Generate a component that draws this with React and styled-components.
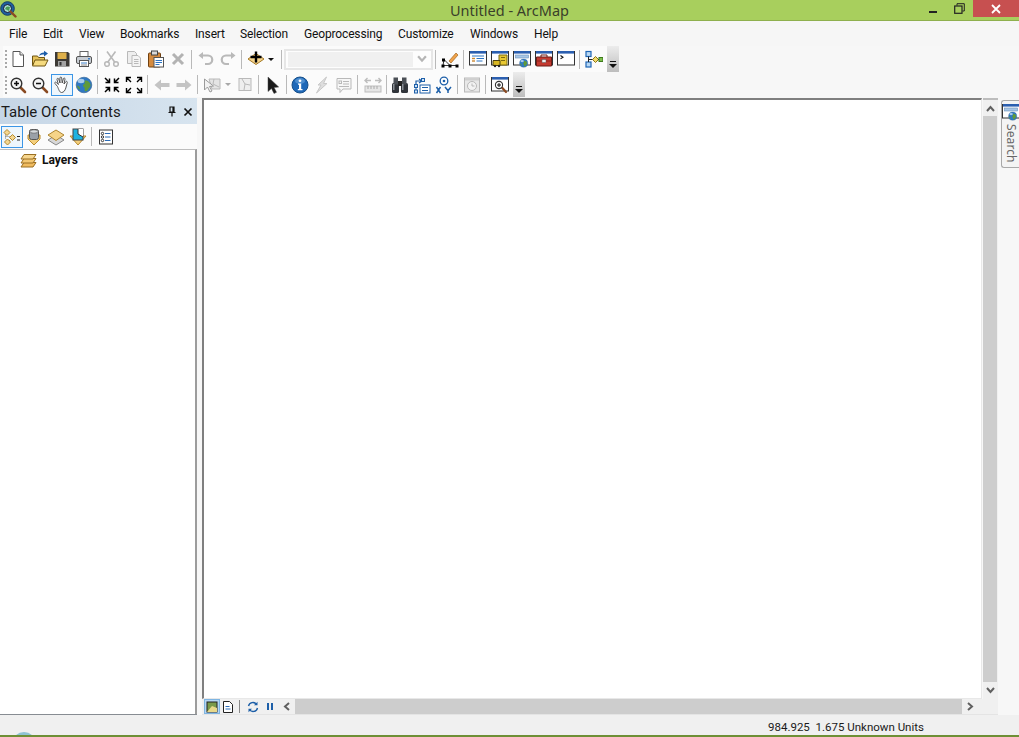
import React from "react";
import styled, { createGlobalStyle } from "styled-components";

const GlobalStyle = createGlobalStyle`
  html, body { margin: 0; padding: 0; background: #f5f5f5; }
  body { font-family: Roboto, "Noto Sans", Arial, sans-serif; overflow: hidden; }
  * { box-sizing: border-box; }
`;

const Window = styled.div`
  width: 1019px; height: 737px; display: flex; flex-direction: column;
  background: #f7f7f7; overflow: hidden; color: #1a1a1a;
`;
const TitleBar = styled.header`
  height: 21px; flex: none; display: flex; align-items: flex-start;
  background: #a8cf5d; border-bottom: 1px solid #8fb04e;
`;
const AppIcon = styled.div`
  width: 17px; height: 20px; padding: 1px 0 0 0; flex: none;
`;
const TitleText = styled.div`
  flex: 1; text-align: center; font-family: "Noto Sans", sans-serif; font-size: 14.5px; line-height: 20px;
  color: #3a3f2a; padding-left: 82px;
`;
const WinControls = styled.div`
  display: flex; height: 17px; flex: none; align-items: stretch;
`;
const WinButton = styled.div`
  width: ${p => p.$w}px; display: flex; align-items: center; justify-content: center;
  background: ${p => p.$close ? "#c75050" : "transparent"};
`;
const MenuBar = styled.nav`
  height: 25px; flex: none; display: flex; align-items: center; padding-left: 9px;
  font-size: 12px; letter-spacing: -0.15px; background: #f6f6f6;
`;
const MenuItem = styled.span`
  width: ${p => p.$w}px; flex: none; white-space: nowrap; color: #111;
`;
const ToolRow = styled.div`
  height: ${p => p.$h}px; flex: none; display: flex; align-items: center;
`;
const Tools = styled.div`
  height: 100%; display: flex; align-items: center; background: #fbfbfb; padding-left: 2px;
  margin-left: 3px;
`;
const Grip = styled.div`
  width: 2px; height: 18px; flex: none;
  background: repeating-linear-gradient(to bottom, #a8a8a8 0 2px, transparent 2px 4px);
`;
const ToolButton = styled.div`
  width: ${p => p.$w || 22}px; height: 22px; flex: none; display: flex; align-items: center; justify-content: flex-start;
  gap: ${p => p.$gap || 0}px;
  border: 1px solid ${p => p.$on ? "#3c96e6" : "transparent"};
  padding-left: 1px;
  background: ${p => p.$on ? "#eef6fc" : "transparent"};
`;
const Sep = styled.div`
  width: ${p => p.$w || 6}px; height: 19px; flex: none;
  &::after { content: ""; display: block; width: 1px; height: 19px; margin-left: 2px; background: #b9b9b9; }
`;
const Caret = styled.div`
  width: 0; height: 0; flex: none;
  border-left: 3px solid transparent; border-right: 3px solid transparent;
  border-top: 3px solid ${p => p.$off ? "#a8a8a8" : "#111"};
`;
const Combo = styled.div`
  width: 149px; height: 21px; flex: none; border: 2px solid #e6e6e6; background: #fdfdfd;
  display: flex; align-items: center; padding: 0 3px 0 2px;
`;
const ComboField = styled.div`
  width: 125px; height: 15px; flex: none; background: #f0f0f0;
`;
const ComboArrow = styled.div`
  flex: 1; display: flex; justify-content: flex-end; padding-right: 1px;
`;
const Overflow = styled.div`
  width: 12px; height: 100%; flex: none; margin-left: 2px;
  background: linear-gradient(to bottom, #ececec, #bdbdbd);
  display: flex; flex-direction: column; align-items: center; justify-content: flex-end; gap: 2px; padding-bottom: 4px;
  &::before { content: ""; width: 6px; height: 1px; background: #111; }
  &::after { content: ""; border-left: 4px solid transparent; border-right: 4px solid transparent; border-top: 4px solid #111; }
`;
const Dock = styled.div`
  flex: 1; min-height: 0; display: flex; align-items: stretch; margin-top: 1px;
`;
const TocPanel = styled.aside`
  width: 197px; flex: none; display: flex; flex-direction: column;
  border-bottom: 1px solid #878c92;
`;
const TocHeader = styled.div`
  height: 26px; flex: none; display: flex; align-items: center; padding: 1px 1px 0 1px;
  background: linear-gradient(to right, #c6d6e6, #d7e4ef);
`;
const TocTitle = styled.div`
  flex: 1; font-size: 15px; color: #1a1a1a; white-space: nowrap;
`;
const TocAction = styled.div`
  width: 16px; height: 16px; display: flex; align-items: center; justify-content: center; flex: none;
`;
const TocTools = styled.div`
  height: 25px; flex: none; display: flex; align-items: center; padding-left: 1px; background: #fbfbfb;
`;
const Tree = styled.div`
  flex: 1; background: #fff; border-top: 1px solid #bdbdbd; border-right: 2px solid #9c9c9c;
  padding: 1px 0 0 20px;
`;
const TreeRow = styled.div`
  display: flex; align-items: center; gap: 5px; height: 18px;
  font-size: 12px; font-weight: 700; color: #111;
`;
const MapArea = styled.main`
  width: 796px; margin-left: 5px; flex: none; display: flex; flex-direction: column;
`;
const MapRow = styled.div`
  flex: 1; min-height: 0; display: flex;
`;
const Canvas = styled.div`
  flex: 1; background: #fff; border-top: 2px solid #7f7f7f; border-left: 2px solid #7f7f7f;
  border-right: 1px solid #e8e8e8; border-bottom: 1px solid #e8e8e8;
`;
const VScroll = styled.div`
  width: 15px; margin-left: 1px; flex: none; display: flex; flex-direction: column; background: #f0f0f0;
  border-top: 2px solid #bdbdbd;
`;
const ScrollEnd = styled.div`
  width: ${p => p.$w || 15}px; height: ${p => p.$h || 15}px; flex: none;
  display: flex; align-items: center; justify-content: center;
`;
const VThumb = styled.div`
  flex: 1; background: #cdcdcd; margin-right: 1px;
`;
const HBar = styled.div`
  height: 16px; flex: none; display: flex; align-items: center; background: #f0f0f0;
  border-bottom: 1px solid #e4e4e4; padding-left: 2px;
`;
const ViewButton = styled.div`
  width: ${p => p.$w || 16}px; height: 15px; flex: none; display: flex; align-items: center; justify-content: center;
  background: ${p => p.$on ? "#b5d6f3" : "transparent"};
  border: 1px solid ${p => p.$on ? "#7fb5e2" : "transparent"};
`;
const HSep = styled.div`
  width: 1px; height: 13px; margin: 0 5px 0 3px; background: #8a8a8a; flex: none;
`;
const HThumb = styled.div`
  width: 667px; height: 15px; flex: none; background: #cdcdcd;
`;
const SearchRail = styled.div`
  width: 21px; flex: none; padding: 2px 0 0 3px;
`;
const SearchTab = styled.div`
  height: 68px; width: 18px; display: flex; flex-direction: column; align-items: center;
  background: #f4f4f4; border: 1px solid #a9a9a9; border-right: 0; border-radius: 3px 0 0 3px; padding-top: 2px;
`;
const SearchLabel = styled.span`
  writing-mode: vertical-rl; font-family: "Noto Sans", sans-serif; font-size: 12px; color: #666; letter-spacing: 0.1px; line-height: 16px; margin-top: 3px;
`;
const StatusBar = styled.footer`
  height: 22px; flex: none; position: relative; background: #f0f0f0;
  border-bottom: 2px solid #6e8f35; display: flex; align-items: center; justify-content: flex-start;
  padding: 3px 0 0 768px; font-size: 11.5px; color: #1a1a1a; white-space: pre; overflow: hidden;
`;
const TaskOrb = styled.div`
  position: absolute; left: 12px; top: 17px; width: 24px; height: 24px; border-radius: 50%;
  background: #8fc3d3;
`;

const G = ({ children }) => <svg width="18" height="18" viewBox="0 0 18 18">{children}</svg>;
const OFF = "#b9b9b9";

const Mag = ({ plus }) => (<>
  <path d="M11 11l5 5" stroke="#8a4a22" strokeWidth="2.6" strokeLinecap="round" />
  <circle cx="7.5" cy="7.5" r="5.3" fill="#f4f4f4" stroke="#333" strokeWidth="1.4" />
  <path d="M5 7.5h5" stroke="#111" strokeWidth="1.5" />
  {plus && <path d="M7.5 5v5" stroke="#111" strokeWidth="1.5" />}
</>);
const Win = ({ children, c = "#2b5fb0" }) => (<>
  <rect x=".5" y="1.5" width="17" height="13.5" fill="#fff" stroke="#333" />
  <rect x="1" y="1" width="16" height="2.6" fill={c} />
  {children}
</>);
const Globe = ({ x = 0, y = 0, k = 1 }) => (
  <g transform={`translate(${x} ${y}) scale(${k})`}>
    <circle cx="9" cy="9" r="7.800" fill="#2f78c4" stroke="#2b5a8c" strokeWidth=".6" />
    <path d="M10 4.500c2.500-.5 5 1.500 5.500 4 .2 1.500-.5 3-1.500 3.500l-1.500 2.500c-1 .8-2.200 1-2.800.5-.3-1.200.3-2.500-.2-3.500-.8-.5-1.700-1-1.500-2.200.3-1 1.500-1 1.800-2 .1-1-.6-1.800.2-2.800z" fill="#5f9a3a" />
    <path d="M2 9.500c1.200 0 2.300 1 2.800 2.300l.2 2c-1.500-.7-2.800-2.300-3-4.300z" fill="#5f9a3a" />
    <ellipse cx="6" cy="5" rx="3.400" ry="2.200" fill="#d4e8f8" opacity=".75" />
  </g>
);

const ICONS = {
  new: <G><path d="M4 1.5h7l3.5 3.5v11.5H4z" fill="#fff" stroke="#555" /><path d="M11 1.5V5h3.5" fill="#e8e8e8" stroke="#555" /></G>,
  open: <G><path d="M1.5 15V6h5l1 1.5h6V10" fill="#e6c25a" stroke="#6f5512" /><path d="M4 10h13l-3 6H1.5z" fill="#f5da7e" stroke="#6f5512" /><path d="M8 6c.5-2.5 3-3.5 5-3.5V.8L17 3.6l-4 2.8V4.6C11 4.6 9.5 5 8 6z" fill="#1c5da8" /></G>,
  save: <G><path d="M2 2h13l1.5 1.5V16.500H2z" fill="#3d3a36" /><rect x="4.500" y="2.500" width="9" height="6.500" fill="#dfb04a" /><rect x="5" y="11" width="8" height="5.500" fill="#a3a3a3" /><rect x="6.500" y="12" width="2" height="3.500" fill="#333" /></G>,
  print: <G><rect x="5" y="1.500" width="8" height="6" fill="#fff" stroke="#666" /><rect x="1.500" y="6.500" width="15" height="7" rx="1.500" fill="#c8cdd3" stroke="#555" /><rect x="4.500" y="10.500" width="9" height="6" fill="#fff" stroke="#555" /><path d="M6 13h6" stroke="#3b7fc6" /><path d="M6 15h6" stroke="#888" /><rect x="13" y="8" width="2" height="1.500" fill="#3b7fc6" /></G>,
  cut: <G><path d="M4 1.500l8 11M12.500 1.500l-8 11" stroke={OFF} strokeWidth="1.600" /><circle cx="4" cy="14" r="2.300" fill="none" stroke={OFF} strokeWidth="1.500" /><circle cx="13" cy="14" r="2.300" fill="none" stroke={OFF} strokeWidth="1.500" /></G>,
  copy: <G><path d="M2.500 1.500h7l2 2v10h-9z" fill="#eee" stroke={OFF} /><path d="M7 5.500h6l2.500 2.500v8.500H7z" fill="#f4f4f4" stroke={OFF} /><path d="M9 9.500h4.500M9 11.500h4.500M9 13.500h4.500" stroke={OFF} /></G>,
  paste: <G><rect x="1.500" y="3" width="12" height="14" rx="1" fill="#d58b3f" stroke="#704010" /><rect x="4.500" y="1" width="6" height="4" fill="#d9d9d9" stroke="#444" /><rect x="7" y="7.500" width="9.500" height="9.500" fill="#fff" stroke="#555" /><path d="M8.500 10.500h6.500M8.500 12.500h6.500M8.500 14.500h4" stroke="#2d74c4" /></G>,
  del: <G><path d="M4 4l10 10M14 4L4 14" stroke="#b3b3b3" strokeWidth="3" /></G>,
  undo: <G><path d="M5 5.500h6a4 4 0 0 1 0 8.500H8" fill="none" stroke={OFF} strokeWidth="2.200" /><path d="M1.500 5.500L6 2v7z" fill={OFF} /></G>,
  redo: <G><path d="M13 5.500H7a4 4 0 0 0 0 8.500h3" fill="none" stroke={OFF} strokeWidth="2.200" /><path d="M16.500 5.500L12 2v7z" fill={OFF} /></G>,
  add: <G><path d="M9 3.500l8 5.500-8 5.500L1 9z" fill="#f5d48c" stroke="#a47824" /><path d="M9 1.500v11M3.500 7h11" stroke="#000" strokeWidth="2.400" /></G>,
  editor: <G><path d="M3 9.500l-1 6M3 9.500l6 6M2 15.500h14" stroke="#333" /><rect x="1" y="8.500" width="3" height="3" fill="#000" /><rect x="0.500" y="14.500" width="3" height="3" fill="#000" /><rect x="7.500" y="14.500" width="3" height="3" fill="#000" /><rect x="14.500" y="14.500" width="3" height="3" fill="#000" /><path d="M8 11L15 3l2 2-7 8z" fill="#f0a24a" stroke="#a06520" strokeWidth=".7" /></G>,
  toc: <G><Win><path d="M3 6h12" stroke="#2d74c4" /><path d="M3 8.500h3" stroke="#c83" strokeWidth="1.400" /><path d="M7.500 8.500h7.500" stroke="#2d74c4" /><path d="M3 11h3" stroke="#c83" strokeWidth="1.400" /><path d="M7.500 11h6" stroke="#2d74c4" /></Win></G>,
  catalog: <G><Win><path d="M8 5h8v10H8z" fill="#e8c832" stroke="#7b6a10" /><path d="M10 7.500h4M10 10.500h4" stroke="#7b6a10" /><path d="M2 10.500h7v5H2z" fill="#d8b722" stroke="#4a4010" /><circle cx="4" cy="16" r="1.200" fill="#222" /><circle cx="8" cy="16" r="1.200" fill="#222" /></Win></G>,
  searchWin: <G><Win><rect x="2.500" y="5" width="13" height="3" fill="#a9c6e6" stroke="#6a8fb8" strokeWidth=".6" /><Globe x={6} y={8.500} k={.52} /></Win></G>,
  toolbox: <G><Win><path d="M1.500 7h15v9h-15z" fill="#c43a30" stroke="#6f1c16" /><path d="M6 7V5h6v2" fill="none" stroke="#6f1c16" /><rect x="7" y="9.500" width="4" height="3" fill="#eee" stroke="#555" strokeWidth=".5" /><path d="M1.500 11h5M11 11h5.500" stroke="#8e241c" /></Win></G>,
  python: <G><Win><path d="M3.500 5.500l2.500 1.700-2.500 1.700" fill="none" stroke="#111" strokeWidth="1.100" /></Win></G>,
  model: <G><rect x="1" y="1.500" width="5" height="5" fill="#b8d8f4" stroke="#1f66b5" strokeWidth="1.200" /><rect x="1" y="12" width="5" height="5" fill="#b8d8f4" stroke="#1f66b5" strokeWidth="1.200" /><path d="M3.500 6.500V12M3.500 9.500H8" stroke="#222" /><path d="M7.500 9.500l3-3 3 3-3 3z" fill="#f4da6a" stroke="#8a7418" /><path d="M13 9.500h1" stroke="#222" /><rect x="14" y="7.500" width="3.800" height="4" fill="#7ec04e" stroke="#3d7a1a" /></G>,
  zin: <G><Mag plus /></G>,
  zout: <G><Mag /></G>,
  hand: <G><path d="M4.500 10.500L2 7.500c-.8-1 .6-2 1.400-1l2 2L4 3.500c-.4-1.200 1.300-1.600 1.700-.5L7 7 6.900 2c0-1.200 1.700-1.200 1.800 0L9.200 7 10.400 2.700c.3-1.100 1.800-.8 1.600.4L11 8l1.800-2.300c.7-.9 2 .1 1.400 1.100L12.800 12c-.8 2.500-2 4.500-4.300 4.500-2 0-2.900-3.500-4-6z" fill="#fff" stroke="#444" strokeWidth=".9" /></G>,
  globe: <G><Globe /></G>,
  fixIn: <G><path d="M2 2l4 4M6.500 2.500v4h-4M16 2l-4 4M11.500 2.500v4h4M2 16l4-4M2.500 11.500h4v4M16 16l-4-4M15.500 11.500h-4v4" fill="none" stroke="#000" strokeWidth="1.500" /></G>,
  fixOut: <G><path d="M6 6L2 2M1.500 6V1.500H6M12 6l4-4M12 1.500h4.500V6M6 12l-4 4M1.500 12v4.500H6M12 12l4 4M16.500 12v4.500H12" fill="none" stroke="#000" strokeWidth="1.400" /></G>,
  back: <G><path d="M1.500 9L8 3.500V7h8.500v4H8v3.500z" fill="#c4c4c4" /></G>,
  fwd: <G><path d="M16.500 9L10 3.500V7H1.500v4H10v3.500z" fill="#c4c4c4" /></G>,
  selFeat: <G><path d="M6 3h11v10H9z" fill="#e4e4e4" stroke={OFF} /><path d="M11 3l-1 5 6 3" fill="none" stroke={OFF} /><path d="M1.500 3v11l3-3 2.500 5 2-1-2.500-4.500 4-.5z" fill="#f2f2f2" stroke="#9a9a9a" /></G>,
  clearSel: <G><rect x="3" y="2.500" width="12" height="12" fill="#eee" stroke={OFF} /><path d="M6 3l3 5 5 1M9 8l-1 6" fill="none" stroke={OFF} /></G>,
  arrow: <G><path d="M4 1v14.500l3.500-3 2.500 5 2.500-1.200-2.400-4.800 4.600-.5z" fill="#1a1a1a" stroke="#444" strokeWidth=".5" /></G>,
  info: <G><circle cx="9" cy="9" r="8" fill="#1e68b8" stroke="#174f8a" /><ellipse cx="9" cy="5" rx="5" ry="3" fill="#6aa6dd" opacity=".6" /><path d="M7 7.500h3.200V13H11.500v1.300H6.800V13H8V8.800H7z" fill="#fff" /><circle cx="9" cy="4.800" r="1.400" fill="#fff" /></G>,
  bolt: <G><path d="M13.500 1L5 9h3l-4.500 8L14 7.500h-3.500z" fill="#dedede" stroke="#c8c8c8" /></G>,
  tip: <G><path d="M2 2.500h14v10.500H8l-3 3.500V13H2z" fill="#f7f7f7" stroke={OFF} /><rect x="4" y="5" width="2.500" height="2.500" fill="none" stroke={OFF} /><path d="M8 5.500h6M8 8h6M4 10.500h10" stroke={OFF} /></G>,
  measure: <G><path d="M1 4.500h6M11 4.500h6M3.500 2L1 4.500 3.500 7M14.500 2L17 4.500 14.500 7" fill="none" stroke="#bdbdbd" strokeWidth="1.400" /><rect x="1" y="10" width="16" height="6" fill="#e6e6e6" stroke="#bdbdbd" /><path d="M4 10v3M7 10v3M10 10v3M13 10v3" stroke="#aaa" /></G>,
  find: <G><rect x="1" y="7" width="7" height="10" rx="1.500" fill="#30343a" /><rect x="10" y="7" width="7" height="10" rx="1.500" fill="#30343a" /><rect x="2.500" y="1.500" width="4.500" height="7" fill="#4a4f55" /><rect x="11" y="1.500" width="4.500" height="7" fill="#4a4f55" /><rect x="7" y="5" width="4" height="5" fill="#222" /><rect x="2" y="8" width="1.500" height="6" fill="#8a8f96" /><rect x="11" y="8" width="1.500" height="6" fill="#8a8f96" /></G>,
  route: <G><path d="M3 10V5h5M6 3l3 2-3 2" fill="none" stroke="#1d5fa8" strokeWidth="1.200" /><rect x="1.500" y="8.500" width="3" height="3" fill="#cfe3f7" stroke="#1d5fa8" /><rect x="1.500" y="14" width="3" height="3" fill="#cfe3f7" stroke="#1d5fa8" /><rect x="8.500" y="2.500" width="3" height="3" fill="#cfe3f7" stroke="#1d5fa8" /><path d="M3 11.500V14" stroke="#1d5fa8" /><rect x="7" y="9" width="10" height="8" fill="#fff" stroke="#1d5fa8" /><path d="M9 11.500h6M9 14.500h6" stroke="#1d5fa8" /></G>,
  xy: <G><circle cx="9" cy="5" r="3.800" fill="#fff" stroke="#1d5fa8" strokeWidth="1.300" /><circle cx="9" cy="5" r="1.300" fill="#1d5fa8" /><path d="M1.500 11l4 6M5.500 11l-4 6M10 11l3 3.500 3-3.500M13 14.500V17" fill="none" stroke="#1d5fa8" strokeWidth="1.500" /></G>,
  time: <G><rect x="1.500" y="2" width="15" height="14" fill="#e8e8e8" stroke={OFF} /><rect x="2" y="2.500" width="14" height="2" fill="#cfcfcf" /><circle cx="9" cy="10" r="4.500" fill="#f3f3f3" stroke={OFF} /><path d="M9 7.500V10h2.500" fill="none" stroke={OFF} /></G>,
  magnifier: <G><Win><path d="M10.500 11l4.500 5" stroke="#8a4a22" strokeWidth="2.200" strokeLinecap="round" /><circle cx="8" cy="9" r="3.600" fill="#fff" stroke="#333" strokeWidth="1.100" /><path d="M6 9h4M8 7v4" stroke="#111" /></Win></G>,
  tocList: <G><path d="M2.500 6.500V11M2.500 8.500H7M4 12.500h3" stroke="#777" strokeDasharray="1 1" /><path d="M4 1.500l3 3-3 3-3-3z" fill="#f3d690" stroke="#b48a2e" /><path d="M9.500 6.500l3 3-3 3-3-3z" fill="#f3d690" stroke="#b48a2e" /><path d="M4.500 11l3 3-3 3-3-3z" fill="#f3d690" stroke="#b48a2e" /><path d="M14 8.500h3M14 12h3" stroke="#222" strokeWidth="1.200" /></G>,
  tocSource: <G><path d="M3 7v4l6 6 6-6V7z" fill="#f4cf7c" stroke="#b98b2e" /><rect x="4.500" y="1.500" width="9" height="10" rx="2" fill="#9aa0a8" stroke="#555" /><ellipse cx="9" cy="3.500" rx="4" ry="1.700" fill="#d6dade" stroke="#555" strokeWidth=".6" /></G>,
  tocDraw: <G><path d="M9 7l8 5-8 5-8-5z" fill="#d8d8d8" stroke="#888" /><path d="M9 2l8 5-8 5.500L1 7z" fill="#f6d488" stroke="#ad8530" /></G>,
  tocSel: <G><path d="M3 8H1l8 9 8-9h-2z" fill="#f4cf7c" stroke="#b98b2e" /><rect x="4" y="1" width="10" height="11" fill="#1fb3e0" stroke="#444" /><path d="M9 1v5l5 3V1z" fill="#fff" /><path d="M9 1v5l5 3" fill="none" stroke="#333" /></G>,
  options: <G><rect x="2.500" y="2" width="13" height="14" fill="#fff" stroke="#333" /><circle cx="5.500" cy="5.500" r="1.200" fill="none" stroke="#333" /><circle cx="5.500" cy="9" r="1.200" fill="none" stroke="#333" /><circle cx="5.500" cy="12.500" r="1.200" fill="none" stroke="#333" /><path d="M8 5.500h5.500M8 9h5.500M8 12.500h5.500" stroke="#2b6cb8" /></G>,
  layers: <svg width="17" height="15" viewBox="0 0 17 15"><path d="M4 9.500h12l-3 4.500H1z" fill="#f0bb5f" stroke="#9a6f22" /><path d="M4 5.500h12l-3 4.500H1z" fill="#f4c873" stroke="#9a6f22" /><path d="M4 1.500h12l-3 4.500H1z" fill="#f7d68e" stroke="#9a6f22" /></svg>,
  dataView: <svg width="12" height="12" viewBox="0 0 12 12"><rect x="1" y="1" width="10" height="10" fill="#7a9a4a" stroke="#222" /><path d="M1 11l5-6 5 2v4z" fill="#e8d88a" /></svg>,
  layoutView: <svg width="12" height="12" viewBox="0 0 12 12"><path d="M1.500.5h6l3 3v8h-9z" fill="#fff" stroke="#222" /><path d="M3.500 5.500h4M3.500 8h5" stroke="#2b6cb8" /></svg>,
  refresh: <svg width="12" height="12" viewBox="0 0 12 12"><path d="M1.500 5a4.500 4.500 0 0 1 8-1.700M10.500 7a4.500 4.500 0 0 1-8 1.700" fill="none" stroke="#1d5fa8" strokeWidth="1.400" /><path d="M10.500.8v3.500H7zM1.500 11.200V7.700H5z" fill="#1d5fa8" /></svg>,
  pause: <svg width="8" height="9" viewBox="0 0 8 9"><path d="M1 1h2v7H1zM5 1h2v7H5z" fill="#1d5fa8" /></svg>,
};

const Chev = ({ d, c = "#606060", s = 9 }) => {
  const paths = { up: "M1 7l3.500-4L8 7", down: "M1 2l3.500 4L8 2", left: "M7 1L3 4.500 7 8", right: "M2 1l4 3.500L2 8" };
  return <svg width={s} height={s} viewBox="0 0 9 9"><path d={paths[d]} fill="none" stroke={c} strokeWidth="2" /></svg>;
};

const I = ({ n }) => ICONS[n];
const Btn = ({ n, on }) => <ToolButton $on={on}><I n={n} /></ToolButton>;
const Group = ({ list }) => list.map((n, i) => <Btn key={i} n={n} />);

const MENUS = [["File", 34], ["Edit", 36], ["View", 41], ["Bookmarks", 75], ["Insert", 45], ["Selection", 64], ["Geoprocessing", 94], ["Customize", 72], ["Windows", 64], ["Help", 40]];

export default function App() {
  return (
    <Window>
      <GlobalStyle />
      <TitleBar>
        <AppIcon>
          <svg width="17" height="17" viewBox="0 0 17 17"><circle cx="7.500" cy="7.500" r="6.800" fill="#1f5fa0" stroke="#173f66" /><circle cx="7.500" cy="7.500" r="4" fill="#a8dcd0" stroke="#113" /><path d="M5 8c1-3 3-3 5-2l-1 4z" fill="#4a9a55" /><path d="M10.500 10.500L15.500 15.500" stroke="#8a4a22" strokeWidth="2.400" strokeLinecap="round" /></svg>
        </AppIcon>
        <TitleText>Untitled - ArcMap</TitleText>
        <WinControls>
          <WinButton $w={25}><svg width="10" height="10" viewBox="0 0 10 10"><rect x="1" y="7" width="8" height="2" fill="#222" /></svg></WinButton>
          <WinButton $w={28}><svg width="11" height="11" viewBox="0 0 11 11"><path d="M3 2.500V.700h7.300V8H8.500" fill="none" stroke="#222" /><rect x=".700" y="3" width="7.300" height="7.300" fill="none" stroke="#222" strokeWidth="1.200" /></svg></WinButton>
          <WinButton $w={46} $close><svg width="10" height="10" viewBox="0 0 10 10"><path d="M1 1l8 8M9 1L1 9" stroke="#fff" strokeWidth="1.800" /></svg></WinButton>
        </WinControls>
      </TitleBar>

      <MenuBar>{MENUS.map(([t, w]) => <MenuItem key={t} $w={w}>{t}</MenuItem>)}</MenuBar>

      <ToolRow $h={26}>
        <Tools>
          <Grip />
          <Group list={["new", "open", "save", "print"]} />
          <Sep />
          <Group list={["cut", "copy", "paste", "del"]} />
          <Sep />
          <Group list={["undo", "redo"]} />
          <Sep />
          <ToolButton $w={34} $gap={3}><I n="add" /><Caret /></ToolButton>
          <Sep $w={5} />
          <Combo><ComboField /><ComboArrow><Chev d="down" c="#b5b5b5" s={10} /></ComboArrow></Combo>
          <Sep />
          <Btn n="editor" />
          <Sep />
          <Group list={["toc", "catalog", "searchWin", "toolbox", "python"]} />
          <Sep />
          <Btn n="model" />
          <Overflow />
        </Tools>
      </ToolRow>
      <ToolRow $h={25}>
        <Tools>
          <Grip />
          <Btn n="zin" /><Btn n="zout" /><Btn n="hand" on /><Btn n="globe" />
          <Sep />
          <Group list={["fixIn", "fixOut"]} />
          <Sep />
          <Group list={["back", "fwd"]} />
          <Sep />
          <ToolButton $w={33} $gap={4}><I n="selFeat" /><Caret $off /></ToolButton>
          <Btn n="clearSel" />
          <Sep />
          <Btn n="arrow" />
          <Sep $w={5} />
          <Group list={["info", "bolt", "tip"]} />
          <Sep $w={7} />
          <Btn n="measure" />
          <Sep $w={5} />
          <Group list={["find", "route", "xy"]} />
          <Sep />
          <Btn n="time" />
          <Sep />
          <Btn n="magnifier" />
          <Overflow />
        </Tools>
      </ToolRow>

      <Dock>
        <TocPanel>
          <TocHeader>
            <TocTitle>Table Of Contents</TocTitle>
            <TocAction><svg width="10" height="11" viewBox="0 0 10 11"><path d="M3 1h4v5H3zM1.500 6.500h7M5 7v3.500M6 1v5" fill="none" stroke="#111" strokeWidth="1.200" /></svg></TocAction>
            <TocAction><svg width="10" height="10" viewBox="0 0 10 10"><path d="M1.500 1.500l7 7M8.500 1.500l-7 7" stroke="#111" strokeWidth="1.700" /></svg></TocAction>
          </TocHeader>
          <TocTools>
            <Btn n="tocList" on /><Btn n="tocSource" /><Btn n="tocDraw" /><Btn n="tocSel" />
            <Sep />
            <Btn n="options" />
          </TocTools>
          <Tree>
            <TreeRow><I n="layers" />Layers</TreeRow>
          </Tree>
        </TocPanel>

        <MapArea>
          <MapRow>
            <Canvas />
            <VScroll>
              <ScrollEnd $h={16}><Chev d="up" /></ScrollEnd>
              <VThumb />
              <ScrollEnd $h={17}><Chev d="down" /></ScrollEnd>
            </VScroll>
          </MapRow>
          <HBar>
            <ViewButton $on><I n="dataView" /></ViewButton>
            <ViewButton><I n="layoutView" /></ViewButton>
            <HSep />
            <ViewButton $w={16}><I n="refresh" /></ViewButton>
            <ViewButton $w={17}><I n="pause" /></ViewButton>
            <ScrollEnd $w={17}><Chev d="left" /></ScrollEnd>
            <HThumb />
            <ScrollEnd $w={17}><Chev d="right" /></ScrollEnd>
          </HBar>
        </MapArea>

        <SearchRail>
          <SearchTab>
            <I n="searchWin" />
            <SearchLabel>Search</SearchLabel>
          </SearchTab>
        </SearchRail>
      </Dock>

      <StatusBar>
        {"984.925  1.675 Unknown Units"}
        <TaskOrb />
      </StatusBar>
    </Window>
  );
}
